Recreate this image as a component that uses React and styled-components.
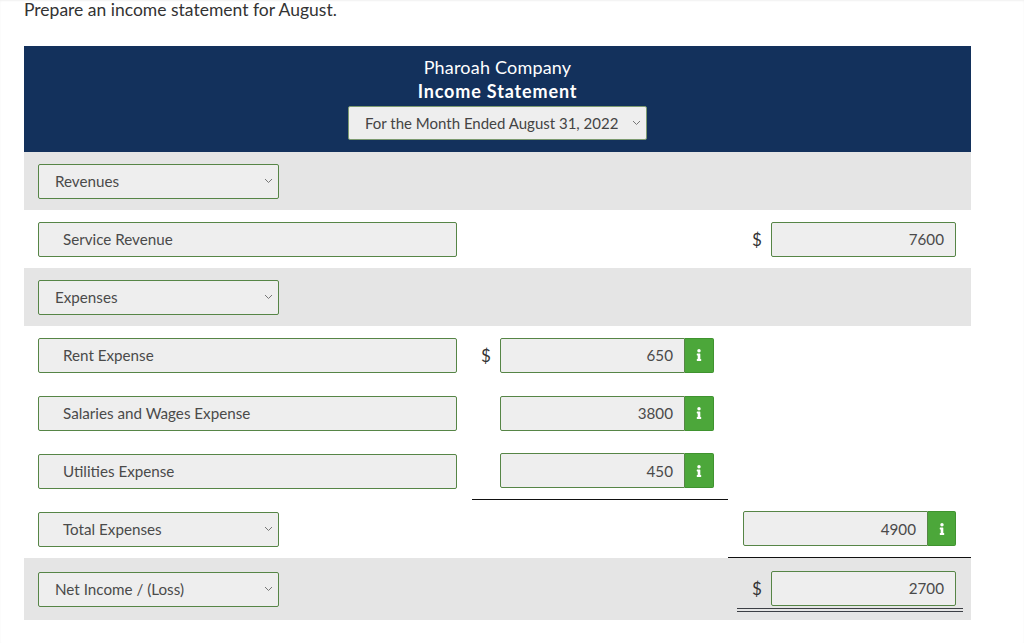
import styled, { createGlobalStyle } from "styled-components"

const GlobalStyle = createGlobalStyle`
  html, body {
    margin: 0;
    padding: 0;
    background: #ffffff;
  }
  body {
    font-family: Lato, "Open Sans", "Liberation Sans", sans-serif;
    color: #333;
  }
`

const Page = styled.div`
  width: 1024px;
  height: 643px;
  padding-left: 24px;
  box-sizing: border-box;
  box-shadow: inset 0 1px 2px rgba(0, 0, 0, 0.06);
  overflow: hidden;
`

const Title = styled.div`
  font-size: 17.5px;
  line-height: 20px;
  color: #333;
`

const Sheet = styled.div`
  width: 947px;
  margin-top: 26px;
`

const Header = styled.div`
  background: #13315c;
  color: #fff;
  display: flex;
  flex-direction: column;
  align-items: center;
  padding: 9px 0 12px;
`

const HeadLine = styled.div`
  font-size: 18px;
  font-weight: ${p => (p.$bold ? 700 : 400)};
  letter-spacing: ${p => (p.$bold ? "0.85px" : "0.2px")};
  line-height: 24px;
`

const Row = styled.div`
  display: grid;
  grid-template-columns: 434px 256px 1fr;
  padding-left: 14px;
  min-height: ${p => p.$tall ? "62px" : "58px"};
  background: ${p => (p.$shade ? "#e5e5e5" : "#fff")};
`

const Cell = styled.div`
  display: flex;
  align-items: center;
  border-bottom: ${p => (p.$rule ? "1px solid #111" : "none")};
  padding-left: ${p => (p.$pad ? "15px" : "0")};
`

const Box = styled.div`
  position: relative;
  box-sizing: border-box;
  height: 35px;
  width: ${p => p.$w}px;
  background: #eeeeee;
  border: 1px solid #568546;
  border-radius: 2px;
  display: flex;
  align-items: center;
  font-size: 15.2px;
  color: #4a4a4a;
  padding-left: ${p => (p.$indent ? "24px" : "16px")};
  padding-right: 11px;
  justify-content: ${p => (p.$right ? "flex-end" : "flex-start")};
`

const HeadSelect = styled(Box)`
  height: 34px;
  border-color: #7c9a70;
  margin-top: 3px;
  color: #444;
  font-size: 15px;
`

const Chevron = styled.svg`
  position: absolute;
  right: ${p => p.$right || 5}px;
  top: 50%;
  margin-top: -3px;
`

const Dollar = styled.div`
  width: 28px;
  text-align: center;
  font-size: 17px;
  color: #333;
`

const Group = styled.div`
  display: flex;
  align-items: center;
`

const Amount = styled(Box)`
  border-radius: ${p => (p.$joined ? "2px 0 0 2px" : "2px")};
  padding-left: 8px;
`

const InfoButton = styled.div`
  width: ${p => p.$w || 29}px;
  height: 35px;
  box-sizing: border-box;
  background: #4ca73a;
  border: 1px solid #3f932f;
  border-left: none;
  border-radius: 0 2px 2px 0;
  display: flex;
  align-items: center;
  justify-content: center;
`

const Doubled = styled.div`
  display: flex;
  flex-direction: column;
  margin-left: -6px;
  padding: 4px 7px 0 6px;
  width: 226px;
  box-sizing: border-box;
`

const DoubleLine = styled.div`
  margin-top: 2px;
  margin-left: -6px;
  margin-right: -7px;
  border-bottom: 4px double #3c3f45;
`

const Arrow = ({ right }) => (
  <Chevron $right={right} width="9" height="6" viewBox="0 0 9 6">
    <path d="M1 1l3.5 3.5L8 1" fill="none" stroke="#777" strokeWidth="1" />
  </Chevron>
)

const InfoIcon = () => (
  <svg width="6" height="12" viewBox="0 0 192 512">
    <path
      fill="#fff"
      d="M20 424.229h20V279.771H20c-11.046 0-20-8.954-20-20V212c0-11.046 8.954-20 20-20h112c11.046 0 20 8.954 20 20v212.229h20c11.046 0 20 8.954 20 20V492c0 11.046-8.954 20-20 20H20c-11.046 0-20-8.954-20-20v-47.771c0-11.046 8.954-20 20-20zM96 0C56.235 0 24 32.235 24 72s32.235 72 72 72 72-32.236 72-72S135.764 0 96 0z"
    />
  </svg>
)

const Select = ({ children, indent }) => (
  <Box $w={241} $indent={indent}>
    {children}
    <Arrow />
  </Box>
)

const Label = ({ children }) => (
  <Box $w={419} $indent>
    {children}
  </Box>
)

const Money = ({ value, dollar, info, btnW }) => (
  <Group>
    {dollar && <Dollar>$</Dollar>}
    <Amount $w={185} $right $joined={info}>{value}</Amount>
    {info && (
      <InfoButton $w={btnW}>
        <InfoIcon />
      </InfoButton>
    )}
  </Group>
)

const ColB = ({ children, rule }) => (
  <Cell $rule={rule}>
    {children && <Group>{children}</Group>}
  </Cell>
)

const App = () => {
  return (
    <Page>
      <GlobalStyle />
      <Title>Prepare an income statement for August.</Title>
      <Sheet>
        <Header>
          <HeadLine>Pharoah Company</HeadLine>
          <HeadLine $bold>Income Statement</HeadLine>
          <HeadSelect $w={299}>
            For the Month Ended August 31, 2022
            <Arrow right={5} />
          </HeadSelect>
        </Header>

        <Row $shade>
          <Cell><Select>Revenues</Select></Cell>
          <Cell />
          <Cell />
        </Row>

        <Row>
          <Cell><Label>Service Revenue</Label></Cell>
          <Cell />
          <Cell $pad><Money value="7600" dollar /></Cell>
        </Row>

        <Row $shade>
          <Cell><Select>Expenses</Select></Cell>
          <Cell />
          <Cell />
        </Row>

        <Row>
          <Cell><Label>Rent Expense</Label></Cell>
          <ColB><Dollar>$</Dollar><Money value="650" info /></ColB>
          <Cell />
        </Row>

        <Row>
          <Cell><Label>Salaries and Wages Expense</Label></Cell>
          <ColB><Dollar /><Money value="3800" info /></ColB>
          <Cell />
        </Row>

        <Row>
          <Cell><Label>Utilities Expense</Label></Cell>
          <ColB rule><Dollar /><Money value="450" info /></ColB>
          <Cell />
        </Row>

        <Row>
          <Cell><Select indent>Total Expenses</Select></Cell>
          <Cell />
          <Cell $pad $rule><Money value="4900" info btnW={28} /></Cell>
        </Row>

        <Row $shade $tall>
          <Cell><Select>Net Income / (Loss)</Select></Cell>
          <Cell />
          <Cell $pad>
            <Doubled>
              <Money value="2700" dollar />
              <DoubleLine />
            </Doubled>
          </Cell>
        </Row>
      </Sheet>
    </Page>
  )
}

export default App
